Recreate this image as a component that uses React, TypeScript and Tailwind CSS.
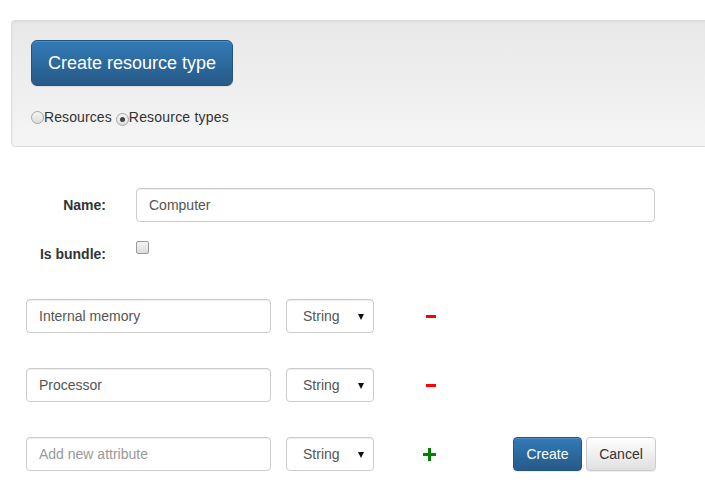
import React from "react";

function Radio({ checked }: { checked?: boolean }) {
  return (
    <span className="relative inline-flex items-center justify-center w-[13px] h-[13px] rounded-full border border-[#a6a6a6] bg-gradient-to-b from-[#f4f4f4] to-[#dedede] shrink-0">
      {checked && <span className="w-[5px] h-[5px] rounded-full bg-[#444]" />}
    </span>
  );
}

function Select() {
  return (
    <div className="relative w-[88px] h-[34px] border border-[#ccc] rounded-[4px] bg-white flex items-center shadow-[inset_0_1px_1px_rgba(0,0,0,0.075)]">
      <span className="pl-[16px] text-[#555] text-[14px]">String</span>
      <svg className="absolute right-[9px] top-[14px]" width="6" height="6" viewBox="0 0 6 6">
        <path d="M0 0 L6 0 L3 6 Z" fill="#111" />
      </svg>
    </div>
  );
}

function TextInput({ value, placeholder, w }: { value?: string; placeholder?: string; w: string }) {
  return (
    <div
      className={`${w} h-[34px] border border-[#ccc] rounded-[4px] bg-white flex items-center px-[12px] text-[14px] shadow-[inset_0_1px_1px_rgba(0,0,0,0.075)]`}
    >
      {value ? <span className="text-[#555]">{value}</span> : <span className="text-[#999]">{placeholder}</span>}
    </div>
  );
}

function Minus() {
  return <span className="block w-[10px] h-[3px] bg-[#ff0000]" />;
}

function Plus() {
  return (
    <svg width="13" height="13" viewBox="0 0 13 13">
      <rect x="5" y="0" width="3" height="13" fill="#008000" />
      <rect x="0" y="5" width="13" height="3" fill="#008000" />
    </svg>
  );
}

export default function App() {
  return (
    <div
      className="w-[705px] h-[490px] overflow-hidden bg-white text-[14px] text-[#333]"
      style={{ fontFamily: '"Liberation Sans", Arial, sans-serif' }}
    >
      <div className="pt-[20px] pl-[11px]">
        <div className="w-[760px] border border-[#dcdcdc] rounded-[4px] bg-gradient-to-b from-[#e8e8e8] to-[#f5f5f5] shadow-[inset_0_1px_3px_rgba(0,0,0,0.05)] p-[19px]">
          <button className="h-[46px] px-[16px] text-[18px] leading-[24px] text-white rounded-[6px] border border-[#245580] bg-gradient-to-b from-[#337ab7] to-[#265a88] shadow-[inset_0_1px_0_rgba(255,255,255,0.15),0_1px_1px_rgba(0,0,0,0.075)]">
            Create resource type
          </button>
          <div className="mt-[21px] h-[20px] flex items-center leading-[20px]">
            <Radio />
            <span className="tracking-[0.1px]">Resources</span>
            <span className="ml-[4px]">
              <Radio checked />
            </span>
            <span className="tracking-[0.2px]">Resource types</span>
          </div>
        </div>
      </div>

      <div className="mt-[41px] flex items-center">
        <div className="w-[106px] text-right font-bold">Name:</div>
        <div className="ml-[30px]">
          <TextInput value="Computer" w="w-[519px]" />
        </div>
      </div>

      <div className="mt-[19px] flex items-start">
        <div className="w-[106px] text-right font-bold pt-[3px] leading-[20px]">Is bundle:</div>
        <div className="ml-[30px]">
          <span className="block w-[13px] h-[13px] rounded-[2px] border border-[#9a9a9a] bg-gradient-to-b from-[#f4f4f4] to-[#dcdcdc]" />
        </div>
      </div>

      <div className="mt-[35px] pl-[26px] flex items-center">
        <TextInput value="Internal memory" w="w-[245px]" />
        <div className="ml-[15px]">
          <Select />
        </div>
        <div className="ml-[52px]">
          <Minus />
        </div>
      </div>

      <div className="mt-[35px] pl-[26px] flex items-center">
        <TextInput value="Processor" w="w-[245px]" />
        <div className="ml-[15px]">
          <Select />
        </div>
        <div className="ml-[52px]">
          <Minus />
        </div>
      </div>

      <div className="mt-[35px] pl-[26px] flex items-center">
        <TextInput placeholder="Add new attribute" w="w-[245px]" />
        <div className="ml-[15px]">
          <Select />
        </div>
        <div className="ml-[49px] flex">
          <Plus />
        </div>
        <button className="ml-[77px] w-[69px] h-[34px] flex items-center justify-center text-[14px] leading-[20px] text-white rounded-[4px] border border-[#245580] bg-gradient-to-b from-[#337ab7] to-[#265a88] shadow-[inset_0_1px_0_rgba(255,255,255,0.15),0_1px_1px_rgba(0,0,0,0.075)]">
          Create
        </button>
        <button className="ml-[4px] w-[70px] h-[34px] flex items-center justify-center text-[14px] leading-[20px] text-[#333] rounded-[4px] border border-[#ccc] bg-gradient-to-b from-white to-[#e0e0e0] shadow-[inset_0_1px_0_rgba(255,255,255,0.15),0_1px_1px_rgba(0,0,0,0.075)]">
          Cancel
        </button>
      </div>
    </div>
  );
}
